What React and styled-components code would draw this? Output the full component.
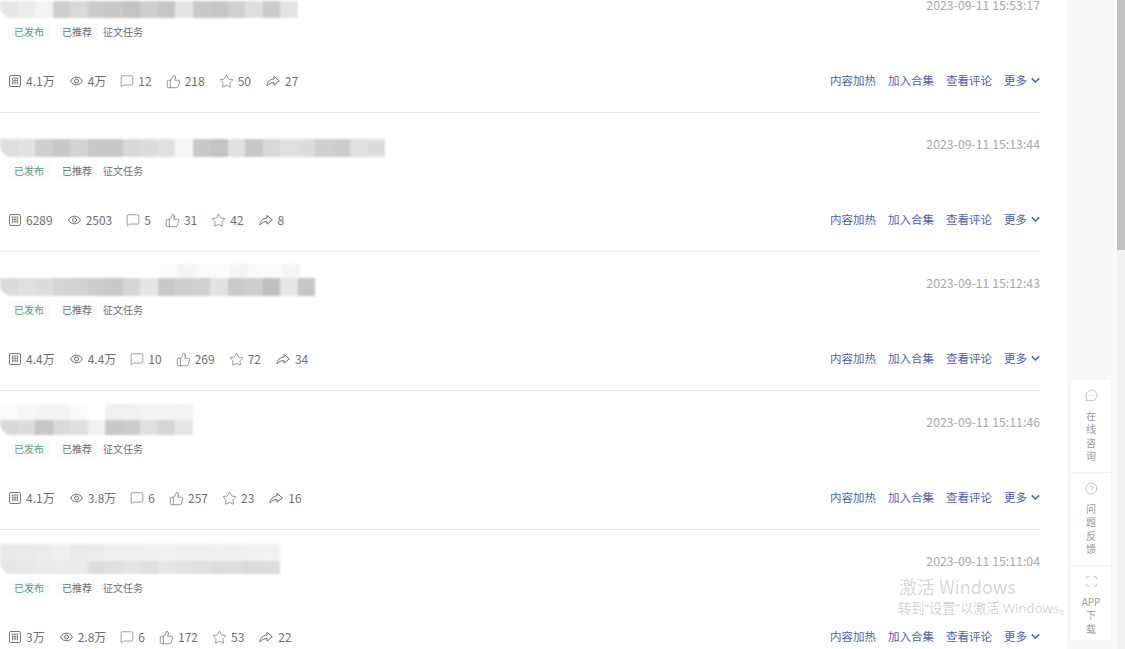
import React from 'react'
import styled, { createGlobalStyle, css } from 'styled-components'
import { CircleHelp, MessageCircleMore, MessageSquare, Scan, Star, ThumbsUp } from 'lucide-react'

const GlobalStyle = createGlobalStyle`
  html, body {
    margin: 0;
    height: 100%;
    overflow: hidden;
    background: #fff;
    font-family: "Noto Sans CJK SC", "Liberation Sans", sans-serif;
  }
`

const Page = styled.div`
  display: flex;
  height: 649px;
  overflow: hidden;
`

const Main = styled.main`
  width: 1040px;
  flex: none;
  margin-top: -26px;
`

const Gutter = styled.div`
  width: 27px;
  flex: none;
`

const Rail = styled.div`
  width: 50px;
  flex: none;
  background: #f7f8fa;
`

const Scrollbar = styled.div`
  width: 8px;
  flex: none;
  background: #f1f1f1;
`

const Thumb = styled.div`
  height: 250px;
  background: #c1c1c1;
`

const Row = styled.article`
  height: 138px;
  border-bottom: 1px solid #e8e8e8;
  &:last-child {
    border-bottom: none;
  }
`

const Head = styled.div`
  height: 36px;
  padding-top: 8px;
  display: flex;
  justify-content: space-between;
  align-items: flex-end;
`

const Smudge = styled.div`
  display: flex;
  flex-direction: column;
  filter: blur(0.8px);
`

const Band = styled.div`
  display: flex;
  height: ${p => p.$h}px;
  padding-left: ${p => p.$left || 0}px;
  overflow: hidden;
  border-bottom-left-radius: ${p => (p.$round ? 12 : 0)}px;
`

const Tile = styled.span`
  flex: none;
  width: 17.5px;
  background: ${p => p.$c};
`

const Date = styled.time`
  margin-bottom: 5px;
  font-size: 12.3px;
  line-height: 16px;
  color: #a9a9a9;
`

const Tags = styled.div`
  display: flex;
  gap: 6px;
  height: 18px;
  margin: 5px 0 0 8px;
`

const Tag = styled.span`
  padding: ${p => (p.$tone === 'plain' ? '0' : '0 6px')};
  margin-left: ${p => (p.$tone === 'plain' ? '-1px' : '0')};
  font-size: 10px;
  line-height: 18px;
  border-radius: 3px;
  color: ${p => (p.$tone === 'green' ? '#5b9c82' : '#6c7076')};
  background: ${p => (p.$tone === 'green' ? '#f8fcfa' : p.$tone === 'gray' ? '#fafbfc' : 'transparent')};
`

const Foot = styled.div`
  display: flex;
  justify-content: space-between;
  align-items: center;
  height: 20px;
  margin-top: 29px;
`

const Stats = styled.ul`
  display: flex;
  gap: 15px;
  margin: 0;
  padding: 0 0 0 9px;
  list-style: none;
`

const Stat = styled.li`
  display: flex;
  align-items: center;
  gap: 5px;
  font-size: 12px;
  color: #707070;
  svg {
    flex: none;
    color: #6a6a6a;
    transform: translateY(1px);
  }
`

const Actions = styled.div`
  display: flex;
  align-items: center;
  gap: 12px;
`

const Action = styled.a`
  display: flex;
  align-items: center;
  gap: 4px;
  font-size: 11.5px;
  line-height: 16px;
  color: #5260b4;
`

const tightIcon = css`
  margin: 0 -1px;
`

const CommentIcon = styled(MessageSquare)`
  ${tightIcon}
`

const LikeIcon = styled(ThumbsUp)`
  ${tightIcon}
`

const StarIcon = styled(Star)`
  ${tightIcon}
`

const FloatCard = styled.aside`
  position: absolute;
  left: 1071px;
  top: 380px;
  width: 40px;
  background: #fff;
  box-shadow: 0 0 3px rgba(0, 0, 0, 0.04);
`

const FloatItem = styled.div`
  display: flex;
  flex-direction: column;
  align-items: center;
  height: ${p => p.$h}px;
  padding-top: 9px;
  box-sizing: border-box;
  border-bottom: 1px solid #f0f0f0;
  color: #999;
  &:last-child {
    border-bottom: none;
  }
  svg {
    flex: none;
    margin-bottom: 7px;
  }
`

const FloatText = styled.span`
  font-size: 10px;
  line-height: 13.3px;
  text-align: center;
  white-space: pre-line;
`

const Watermark = styled.div`
  position: absolute;
  left: 899px;
  top: 574px;
  pointer-events: none;
  color: rgba(0, 0, 0, 0.18);
  white-space: nowrap;
`

const WatermarkTitle = styled.div`
  font-size: 18px;
  line-height: 25px;
`

const WatermarkHint = styled.div`
  margin-left: -1px;
  font-family: "Open Sans", "Noto Sans CJK SC", sans-serif;
  font-size: 13.2px;
  line-height: 18px;
  color: rgba(0, 0, 0, 0.2);
`

const ReadIcon = () => (
  <svg width="12" height="14" viewBox="0 0 12 14" fill="none" stroke="currentColor" strokeWidth="0.9">
    <rect x="0.5" y="1.5" width="11" height="11" rx="1.5" />
    <path d="M2.5 4h7M3.5 4v6.5M8.5 4v6.5M3.5 6.6h5M3.5 8.8h5M6 4v6" strokeWidth="0.7" />
  </svg>
)

const EyeIcon = () => (
  <svg width="13" height="14" viewBox="0 0 13 14" fill="none" stroke="currentColor" strokeWidth="1">
    <path d="M0.6 7C1.8 4.6 4 3.2 6.5 3.2S11.2 4.6 12.4 7C11.2 9.4 9 10.8 6.5 10.8S1.8 9.4 0.6 7Z" />
    <circle cx="6.5" cy="7" r="2" />
  </svg>
)

const ShareIcon = () => (
  <svg width="14" height="14" viewBox="0 0 14 14" fill="none" stroke="currentColor" strokeWidth="1" strokeLinejoin="round">
    <path d="M8 2.4L13.3 6.8L8 11.2V8.6C5.2 8.6 3 9.6 0.9 12C1.3 8.2 3.9 5.2 8 5V2.4Z" />
  </svg>
)

const MoreIcon = () => (
  <svg width="9" height="7" viewBox="0 0 9 7" fill="none" stroke="currentColor" strokeWidth="1.5">
    <path d="M0.8 1.4L4.5 5L8.2 1.4" />
  </svg>
)

const faint = (n, a, b) => Array.from({ length: n }, (_, i) => (i % 3 === 1 ? a : b))

const titles = [
  {
    bands: [
      {
        h: 17,
        round: true,
        colors: ['#e6e6e6', '#ececec', '#f3f3f3', '#cecece', '#d9d9d9', '#cbcbcb', '#c9c9c9', '#c3c3c3', '#cecece', '#c6c6c6', '#e5e5e5', '#c9c9c9', '#c6c6c6', '#d0d0d0', '#dedede', '#cbcbcb', '#e4e4e4'],
      },
    ],
  },
  {
    bands: [
      {
        h: 18,
        round: true,
        colors: ['#dedede', '#e2e2e2', '#cfcfcf', '#c8c8c8', '#d3d3d3', '#c9c9c9', '#c8c8c8', '#d8d8d8', '#dbdbdb', '#e0e0e0', '#f7f7f7', '#c9c9c9', '#c4c4c4', '#e0e0e0', '#c6c6c6', '#d8d8d8', '#dfdfdf', '#dcdcdc', '#cfcfcf', '#cdcdcd', '#e0e0e0', '#dcdcdc'],
      },
    ],
  },
  {
    bands: [
      { h: 14, left: 160, colors: faint(8, '#f4f4f4', '#fafafa') },
      {
        h: 18,
        round: true,
        colors: ['#dadada', '#e0e0e0', '#dcdcdc', '#d4d4d4', '#d2d2d2', '#cdcdcd', '#c9c9c9', '#d6d6d6', '#e4e4e4', '#c9c9c9', '#cfcfcf', '#d0d0d0', '#e2e2e2', '#cacaca', '#cfcfcf', '#bfbfbf', '#e6e6e6', '#c6c6c6'],
      },
    ],
  },
  {
    bands: [
      { h: 16, colors: ['#fbfbfb', '#f7f7f7', '#f5f5f5', '#f4f4f4', '#fafafa', '#ffffff', '#f0f0f0', '#f1f1f1', '#f3f3f3', '#f4f4f4', '#f2f2f2'] },
      {
        h: 15,
        round: true,
        colors: ['#d8d8d8', '#dcdcdc', '#c6c6c6', '#dadada', '#dedede', '#f2f2f2', '#c8c8c8', '#cccccc', '#e0e0e0', '#d6d6d6', '#e6e6e6'],
      },
    ],
  },
  {
    bands: [
      { h: 17, colors: ['#e9e9e9', '#eaeaea', '#ececec', '#eeeeee', '#eaeaea', '#ececec', '#eeeeee', '#eeeeee', '#efefef', '#f0f0f0', '#eeeeee', '#eeeeee', '#efefef', '#eeeeee', '#f0f0f0', '#f2f2f2'] },
      {
        h: 13,
        round: true,
        colors: ['#e6e6e6', '#e8e8e8', '#eaeaea', '#ebebeb', '#ebebeb', '#dcdcdc', '#e0e0e0', '#e4e4e4', '#e0e0e0', '#e6e6e6', '#e2e2e2', '#e0e0e0', '#dcdcdc', '#dddddd', '#dadada', '#dcdcdc'],
      },
    ],
  },
]

const rows = [
  { date: '2023-09-11 15:53:17', stats: ['4.1万', '4万', '12', '218', '50', '27'] },
  { date: '2023-09-11 15:13:44', stats: ['6289', '2503', '5', '31', '42', '8'] },
  { date: '2023-09-11 15:12:43', stats: ['4.4万', '4.4万', '10', '269', '72', '34'] },
  { date: '2023-09-11 15:11:46', stats: ['4.1万', '3.8万', '6', '257', '23', '16'] },
  { date: '2023-09-11 15:11:04', stats: ['3万', '2.8万', '6', '172', '53', '22'] },
]

const statIcons = [
  <ReadIcon />,
  <EyeIcon />,
  <CommentIcon size={14} strokeWidth={1.1} />,
  <LikeIcon size={15} strokeWidth={1.1} />,
  <StarIcon size={15} strokeWidth={1.1} />,
  <ShareIcon />,
]

const App = () => {
  return (
    <>
      <GlobalStyle />
      <Page>
        <Main>
          {rows.map((row, i) => (
            <Row key={row.date}>
              <Head>
                <Smudge>
                  {titles[i].bands.map((band, b) => (
                    <Band key={b} $h={band.h} $left={band.left} $round={band.round}>
                      {band.colors.map((c, t) => (
                        <Tile key={t} $c={c} />
                      ))}
                    </Band>
                  ))}
                </Smudge>
                <Date>{row.date}</Date>
              </Head>
              <Tags>
                <Tag $tone="green">已发布</Tag>
                <Tag $tone="gray">已推荐</Tag>
                <Tag $tone="plain">征文任务</Tag>
              </Tags>
              <Foot>
                <Stats>
                  {row.stats.map((value, s) => (
                    <Stat key={s}>
                      {statIcons[s]}
                      {value}
                    </Stat>
                  ))}
                </Stats>
                <Actions>
                  <Action>内容加热</Action>
                  <Action>加入合集</Action>
                  <Action>查看评论</Action>
                  <Action>
                    更多
                    <MoreIcon />
                  </Action>
                </Actions>
              </Foot>
            </Row>
          ))}
        </Main>
        <Gutter />
        <Rail />
        <Scrollbar>
          <Thumb />
        </Scrollbar>
      </Page>
      <FloatCard>
        <FloatItem $h={93}>
          <MessageCircleMore size={13} strokeWidth={1} />
          <FloatText>{'在\n线\n咨\n询'}</FloatText>
        </FloatItem>
        <FloatItem $h={93}>
          <CircleHelp size={13} strokeWidth={1} />
          <FloatText>{'问\n题\n反\n馈'}</FloatText>
        </FloatItem>
        <FloatItem $h={74}>
          <Scan size={13} strokeWidth={1} />
          <FloatText>{'APP\n下\n载'}</FloatText>
        </FloatItem>
      </FloatCard>
      <Watermark>
        <WatermarkTitle>激活 Windows</WatermarkTitle>
        <WatermarkHint>转到“设置”以激活 Windows。</WatermarkHint>
      </Watermark>
    </>
  )
}

export default App
